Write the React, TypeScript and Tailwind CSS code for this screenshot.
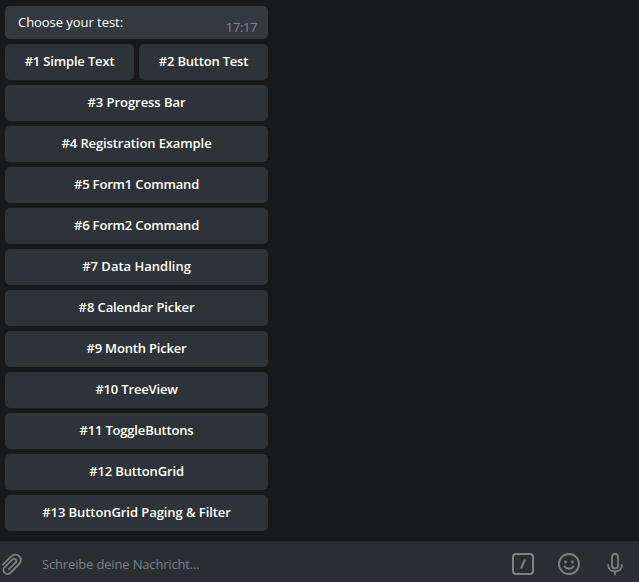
const rows = [
  [{ text: '#1 Simple Text', tracking: 'tracking-[-0.17px]' }, { text: '#2 Button Test', tracking: 'tracking-[-0.2px]' }],
  [{ text: '#3 Progress Bar', tracking: 'tracking-[-0.05px]' }],
  [{ text: '#4 Registration Example', tracking: 'tracking-[-0.1px]' }],
  [{ text: '#5 Form1 Command', tracking: 'tracking-[-0.16px]' }],
  [{ text: '#6 Form2 Command', tracking: 'tracking-[-0.16px]' }],
  [{ text: '#7 Data Handling', tracking: 'tracking-normal' }],
  [{ text: '#8 Calendar Picker', tracking: 'tracking-[-0.1px]' }],
  [{ text: '#9 Month Picker', tracking: 'tracking-[-0.18px]' }],
  [{ text: '#10 TreeView', tracking: 'tracking-[-0.18px]' }],
  [{ text: '#11 ToggleButtons', tracking: 'tracking-[-0.18px]' }],
  [{ text: '#12 ButtonGrid', tracking: 'tracking-[-0.14px]' }],
  [{ text: '#13 ButtonGrid Paging & Filter', tracking: 'tracking-[-0.07px]' }],
];

function ClipIcon() {
  return (
    <svg className="h-6 w-6 shrink-0" viewBox="0 0 24 24" fill="none" stroke="#80817e" strokeWidth="1.8" strokeLinecap="round" strokeLinejoin="round">
      <path transform="translate(-.6 0) rotate(45 12 12)" d="M6.5 18.5V6.5a5.5 5.5 0 0 1 11 0V19a4 4 0 0 1-8 0V8a2.2 2.2 0 0 1 4.4 0V17.5" />
    </svg>
  );
}

function CommandIcon() {
  return (
    <svg className="h-6 w-6 shrink-0" viewBox="0 0 24 24" fill="none" stroke="#80817e" strokeWidth="2">
      <rect x="2" y="2" width="20" height="20" rx="3" />
      <path d="M14 7.5L10 16.5" />
    </svg>
  );
}

function SmileIcon() {
  return (
    <svg className="h-6 w-6 shrink-0" viewBox="0 0 24 24" fill="none" stroke="#80817e" strokeWidth="1.9" strokeLinecap="round">
      <circle cx="12" cy="12" r="10" />
      <path d="M7.5 14.5Q12 19 16.5 14.5" />
      <circle cx="8.5" cy="10" r="1.4" fill="#80817e" stroke="none" />
      <circle cx="15.5" cy="10" r="1.4" fill="#80817e" stroke="none" />
    </svg>
  );
}

function MicIcon() {
  return (
    <svg className="h-6 w-6 shrink-0" viewBox="0 0 24 24" fill="none" stroke="#80817e" strokeWidth="1.8">
      <rect x="9" y="2" width="6" height="14.5" rx="3" />
      <path d="M5 12.3C5 17 8 19.5 12 19.5S19 17 19 12.3M12 19.5V23.3" />
    </svg>
  );
}

export default function App() {
  return (
    <div className="flex h-[582px] w-[639px] flex-col overflow-hidden bg-[#18191d] font-['Open_Sans',sans-serif] text-[13px] text-white">
      <main className="flex flex-1 flex-col gap-[5px] px-[5px] pt-[6px]">
        <div className="flex h-[33px] w-[263px] items-start justify-between rounded-[5px] bg-[#33393f] pl-[13px] pr-[11px]">
          <span className="mt-[7px] tracking-[-0.05px] leading-[18px]">Choose your test:</span>
          <span className="mt-[12px] tracking-[-0.4px] leading-[18px] text-[#82868f]">17:17</span>
        </div>
        {rows.map((row) => (
          <div key={row[0].text} className="flex w-[263px] gap-[5px]">
            {row.map(({ text, tracking }) => (
              <button key={text} className={`h-9 flex-1 rounded-[5px] bg-[#2e3339] pb-[2px] font-semibold leading-[18px] ${tracking}`}>
                {text}
              </button>
            ))}
          </div>
        ))}
      </main>
      <footer className="flex h-[41px] items-center bg-[#282e33] pr-3 pt-[5px]">
        <ClipIcon />
        <span className="ml-[18px] mt-px flex-1 tracking-[-0.16px] text-[#7b8087]">Schreibe deine Nachricht...</span>
        <div className="flex items-center gap-[22px]">
          <CommandIcon />
          <SmileIcon />
          <MicIcon />
        </div>
      </footer>
    </div>
  );
}
